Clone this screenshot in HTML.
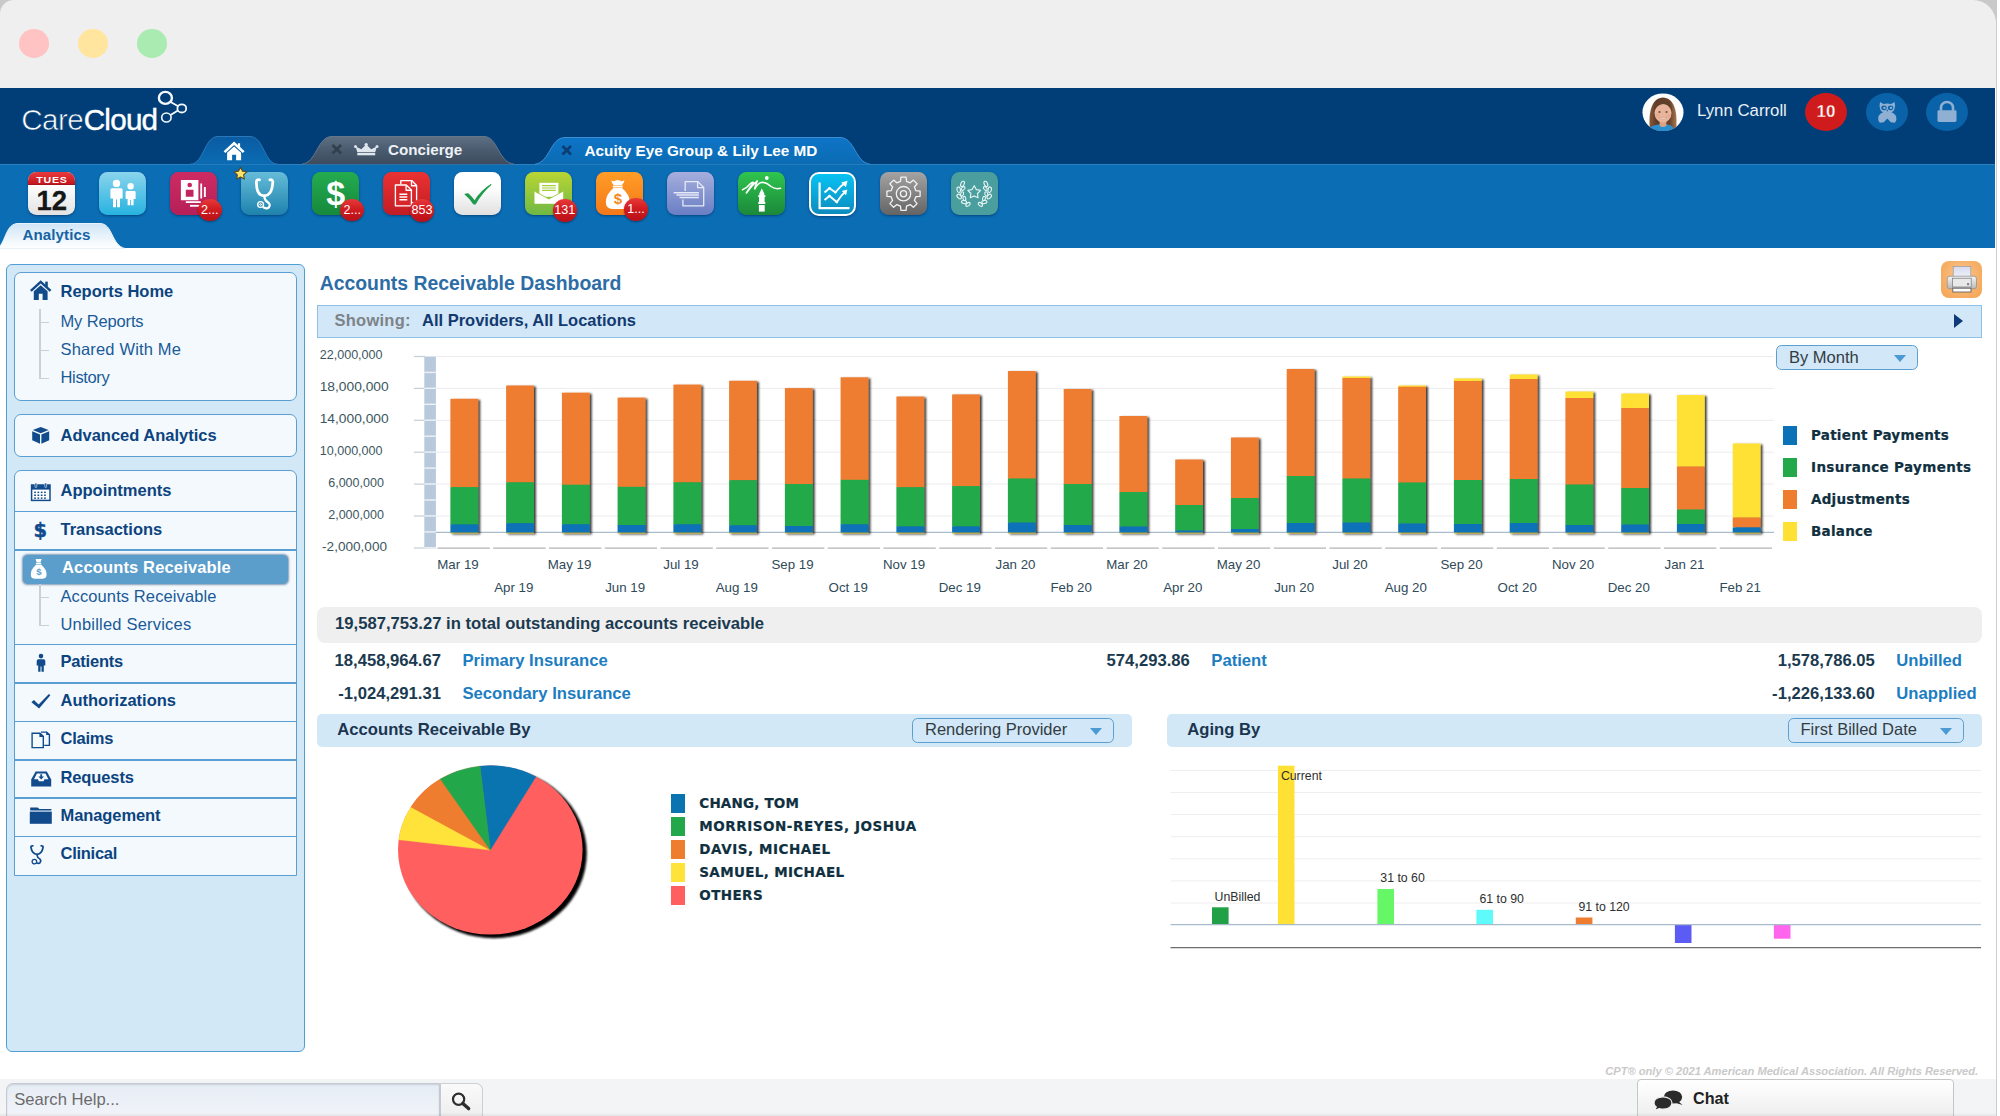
<!DOCTYPE html>
<html lang="en">
<head>
<meta charset="utf-8">
<title>CareCloud - Accounts Receivable Dashboard</title>
<style>
*{box-sizing:border-box;margin:0;padding:0}
html,body{width:2000px;height:1116px;overflow:hidden;background:#fff;font-family:"Liberation Sans",Arial,sans-serif;}
.abs{position:absolute}
#win{position:absolute;left:0;top:0;width:1997.5px;height:1116px;background:#fff;overflow:hidden}
#cornerbg{position:absolute;left:0;top:0;width:1997px;height:40px;background:#c9c9c9}
#redge{position:absolute;left:1996.1px;top:20px;width:1.4px;height:1100px;background:#cdcdcd}
#titlebar{position:absolute;left:0;top:0;width:1996.3px;height:88px;background:#efefef;border-radius:14px 23px 0 0}
.tl{position:absolute;top:28.6px;width:30.8px;height:29.2px;border-radius:50%}
#navy{position:absolute;left:0;top:87.5px;width:1995.2px;height:77.5px;background:#013e78}
#blue{position:absolute;left:0;top:164.4px;width:1995.2px;height:83.3px;background:#0b6db4;border-top:1px solid #2d7fbe}
#foot{position:absolute;left:0;top:1079.2px;width:1995.6px;height:37px;background:#f2f4f5}
/* sidebar */
#side{position:absolute;left:6px;top:264px;width:299px;height:788px;background:#d3e8f6;border:1.5px solid #4f9fd6;border-radius:6px}
.sbox{position:absolute;background:#f4f9fd;border:1.5px solid #5a9fd3;border-radius:7px}
.sh{position:absolute;font-weight:bold;font-size:16.5px;line-height:20px;color:#0c4480;white-space:nowrap;margin-left:.5px}
.ss{position:absolute;font-size:16.5px;line-height:20px;color:#1a5a98;white-space:nowrap;margin-left:.5px}
.sep{position:absolute;width:281px;height:1.5px;background:#5a9fd3}
.ico{position:absolute}
/* main */
#title{position:absolute;left:319.7px;top:272px;font-size:19.4px;line-height:22px;font-weight:bold;color:#2d6da6;white-space:nowrap}
.lbar{position:absolute;background:#d3e8f6;border-radius:5px}
.b16{font-weight:bold;font-size:16.65px;line-height:20px;color:#1b3a50;white-space:nowrap;position:absolute}
.lnk{font-weight:bold;font-size:16.65px;line-height:20px;color:#1c7dc1;white-space:nowrap;position:absolute}
.dd{position:absolute;background:#d2e7f7;border:1.3px solid #5b9fd0;border-radius:5.5px;font-size:16.5px;line-height:20px;color:#333c44;white-space:nowrap}
.dd span{position:absolute;left:12px;top:.6px}
.dd i{position:absolute;right:10.6px;top:9.2px;width:0;height:0;border-left:6.5px solid transparent;border-right:6.5px solid transparent;border-top:7.2px solid #4a9ad4}
.ti{position:absolute;top:172px;width:47.2px;height:43.2px;border-radius:8.5px;box-shadow:0 1px 2.5px rgba(0,20,60,.45)}
.bdg{position:absolute;width:24.4px;height:22.4px;margin-top:2.2px;border-radius:50%;background:linear-gradient(#e8393a 0%,#d11d22 45%,#b80f16 100%);color:#fff;font-size:12.6px;line-height:22.6px;text-align:center;box-shadow:0 1px 2px rgba(0,0,0,.4)}
.lg{position:absolute;font-family:"DejaVu Sans","Liberation Sans",sans-serif;font-weight:bold;font-size:13.5px;line-height:20px;color:#10303f;white-space:nowrap;letter-spacing:.25px;-webkit-text-stroke:.2px #10303f}
</style>
</head>
<body>
<div id="win">
<div id="cornerbg"></div><div id="redge"></div>
<div id="titlebar">
  <div class="tl" style="left:18.6px;background:#ffc3c4"></div>
  <div class="tl" style="left:77.6px;background:#ffe59d"></div>
  <div class="tl" style="left:136.6px;background:#a9ebb1"></div>
</div>
<div id="navy"></div>
<div id="blue"></div>
<!--HEADER-START-->
<!-- logo -->
<div class="abs" style="left:21.3px;top:102.5px;font-size:29.6px;line-height:34px;color:#fff;white-space:nowrap;letter-spacing:-.55px"><span style="-webkit-text-stroke:.65px #013e78">Care</span><span style="-webkit-text-stroke:.45px #fff;letter-spacing:-.75px;margin-left:.5px">Cloud</span></div>
<svg class="abs" style="left:155px;top:88px" width="36" height="40" viewBox="0 0 36 40"><g fill="none" stroke="#f4f9ff"><line x1="15.6" y1="14" x2="23.2" y2="18.3" stroke-width="1.8"/><line x1="22.9" y1="22.4" x2="15.6" y2="27" stroke-width="1.8"/><ellipse cx="10.4" cy="9.9" rx="6.5" ry="6" stroke-width="2.4"/><ellipse cx="26.8" cy="20.4" rx="4.4" ry="4.1" stroke-width="1.8"/><ellipse cx="11.4" cy="29.5" rx="4.7" ry="4.5" stroke-width="1.6"/></g></svg>
<!-- tabs -->
<svg class="abs" style="left:180px;top:130.4px" width="700" height="36" viewBox="0 0 700 36">
<defs>
<linearGradient id="gh" x1="0" y1="0" x2="0" y2="1"><stop offset="0" stop-color="#0a5ba3"/><stop offset="1" stop-color="#0b6cb3"/></linearGradient>
<linearGradient id="gc" x1="0" y1="0" x2="0" y2="1"><stop offset="0" stop-color="#5d6f83"/><stop offset=".5" stop-color="#4a5b6f"/><stop offset="1" stop-color="#3c4b5d"/></linearGradient>
<linearGradient id="ga" x1="0" y1="0" x2="0" y2="1"><stop offset="0" stop-color="#0e74c8"/><stop offset="1" stop-color="#0b6cb3"/></linearGradient>
</defs>
<path d="M10 34.2 C24 34.2 24 6.5 38 6.5 L70 6.5 C84 6.5 84 34.2 98 34.2 Z" fill="url(#gh)"/><path d="M10 34.2 C24 34.2 24 6.5 38 6.5 L70 6.5 C84 6.5 84 34.2 98 34.2" fill="none" stroke="#2a78b8" stroke-width="1"/>
<path d="M122 34.2 C137 32.5 137 6.5 152 6.5 L304 6.5 C318 6.5 318 32.5 334 34.2 Z" fill="url(#gc)"/><path d="M122 34.2 C137 32.5 137 6.5 152 6.5 L304 6.5 C318 6.5 318 32.5 334 34.2" fill="none" stroke="#66778a" stroke-width="1"/>
<path d="M355 34.2 C370 32.5 370 7.5 385 7.5 L660 7.5 C675 7.5 675 32.5 690 34.2 Z" fill="url(#ga)"/><path d="M355 34.2 C370 32.5 370 7.5 385 7.5 L660 7.5 C675 7.5 675 32.5 690 34.2" fill="none" stroke="#3a8ed2" stroke-width="1"/>
<!-- home icon -->
<g fill="#fff" transform="translate(0.6 2.2)"><path d="M53.5 9.2 L43 19 L44.8 20.8 L53.5 12.8 L62.2 20.8 L64 19 L59.5 14.8 L59.5 11 L57.3 11 L57.3 12.8 Z"/><path d="M46.5 20.5 L53.5 14.2 L60.5 20.5 L60.5 28 L55.5 28 L55.5 22.5 L51.5 22.5 L51.5 28 L46.5 28 Z"/></g>
<!-- crown -->
<g fill="#dfe5ec"><path d="M177.3 22.3 L175.6 16.6 L181.3 19.2 L186.2 14.6 L191.2 19.2 L196.9 16.6 L195.2 22.3 Z"/><rect x="177.3" y="23" width="17.9" height="2.3"/><circle cx="186.2" cy="14.6" r="1.7"/><circle cx="175.5" cy="16.6" r="1.5"/><circle cx="197" cy="16.6" r="1.5"/></g>
<g stroke="#333f4d" stroke-width="2.6" stroke-linecap="butt"><line x1="152.5" y1="15" x2="161" y2="23.5"/><line x1="161" y1="15" x2="152.5" y2="23.5"/></g>
<g stroke="#0d3d72" stroke-width="2.6"><line x1="382.5" y1="16" x2="391" y2="24.5"/><line x1="391" y1="16" x2="382.5" y2="24.5"/></g>
</svg>
<div class="abs" style="left:388px;top:139.6px;font-size:15.2px;line-height:20px;font-weight:bold;color:#eef2f6;white-space:nowrap">Concierge</div>
<div class="abs" style="left:584.5px;top:141px;font-size:15.3px;line-height:20px;font-weight:bold;color:#fff;white-space:nowrap">Acuity Eye Group &amp; Lily Lee MD</div>
<!-- user -->
<svg class="abs" style="left:1642.3px;top:92.6px" width="42" height="38.6" viewBox="0 0 44 44" preserveAspectRatio="none">
<defs><clipPath id="av"><circle cx="22" cy="22" r="21.5"/></clipPath><linearGradient id="hg" x1="0" y1="0" x2="1" y2="0"><stop offset="0" stop-color="#8a5a3c"/><stop offset=".25" stop-color="#5e3b28"/><stop offset=".75" stop-color="#6a432c"/><stop offset="1" stop-color="#a87650"/></linearGradient></defs>
<circle cx="22" cy="22" r="21.5" fill="#fdfdfd"/>
<g clip-path="url(#av)">
<path d="M8.5 44 C6.5 26 8.5 5.5 22 5 C35.5 5.5 37.5 26 35.5 44 Z" fill="url(#hg)"/>
<path d="M6 44 C8 37.5 14 36 19 36 L25 36 C30 36 33 38 34 44 Z" fill="#2a8fd0"/>
<path d="M18.5 30 H25.5 V37.5 Q22 40 18.5 37.5 Z" fill="#dba184"/>
<ellipse cx="22" cy="22.6" rx="8.9" ry="11.2" fill="#e8b59a"/>
<path d="M12.8 21 C12.6 11.5 18 8.6 22.6 8.6 C28 8.6 31.4 12.4 31.2 21 C29.6 15.6 26.4 12.8 22.2 12.4 C17.6 13 14.6 16 12.8 21 Z" fill="#61402b"/>
<path d="M17.6 27.6 Q22 31.8 26.4 27.6 Q22 29.4 17.6 27.6 Z" fill="#fff" stroke="#c98a78" stroke-width=".5"/>
<ellipse cx="18.3" cy="21.6" rx="1.3" ry=".9" fill="#4a3428"/><ellipse cx="25.7" cy="21.6" rx="1.3" ry=".9" fill="#4a3428"/>
<ellipse cx="16.3" cy="25.6" rx="2" ry="1.3" fill="#e39c8a" opacity=".55"/><ellipse cx="27.7" cy="25.6" rx="2" ry="1.3" fill="#e39c8a" opacity=".55"/>
</g>
</svg>
<div class="abs" style="left:1697px;top:101px;font-size:16.8px;line-height:20px;color:#eaf0f7;white-space:nowrap">Lynn Carroll</div>
<div class="abs" style="left:1805px;top:93px;width:42px;height:38px;border-radius:50%;background:#cf1b1b;color:#fff;font-weight:bold;font-size:17px;line-height:38.6px;text-align:center;-webkit-text-stroke:.35px #cf1b1b">10</div>
<div class="abs" style="left:1866px;top:93px;width:42px;height:38px;border-radius:50%;background:#0a62a8"></div>
<div class="abs" style="left:1926px;top:93px;width:42px;height:38px;border-radius:50%;background:#0a62a8"></div>
<svg class="abs" style="left:1866px;top:93px" width="42" height="38" viewBox="0 0 42 42" preserveAspectRatio="none"><path d="M14 9.9 L17.5 12.2 Q21.3 11 25.1 12.2 L28.6 9.9 Q29.7 15 28.3 18.6 Q27.4 20.6 25.5 21.4 Q30.8 23.5 30.4 29 Q30.2 31.6 28.8 32.8 L24.8 32.2 L21.3 28.2 L17.8 32.2 L13.8 32.8 Q12.4 31.6 12.2 29 Q11.8 23.5 17.1 21.4 Q15.2 20.6 14.3 18.6 Q12.9 15 14 9.9 Z" fill="#8fb0d2"/><circle cx="18" cy="16.4" r="2.7" fill="#0a62a8"/><circle cx="24.6" cy="16.4" r="2.7" fill="#0a62a8"/><circle cx="18.4" cy="16.4" r="1.3" fill="#8fb0d2"/><circle cx="25" cy="16.4" r="1.3" fill="#8fb0d2"/><path d="M20.3 18.6 L22.3 18.6 L21.3 20.6 Z" fill="#0a62a8"/></svg>
<svg class="abs" style="left:1926px;top:93px" width="42" height="38" viewBox="0 0 42 42" preserveAspectRatio="none"><rect x="11.5" y="19" width="19" height="13" rx="1.5" fill="#8fb0d2"/><path d="M15 19.5 V16 a6 6 0 0 1 12 0 V19.5" fill="none" stroke="#8fb0d2" stroke-width="2.6"/></svg>
<!-- analytics tab -->
<svg class="abs" style="left:0;top:219.8px" width="130" height="29" viewBox="0 0 130 29"><defs><linearGradient id="gan" x1="0" y1="0" x2="0" y2="1"><stop offset="0" stop-color="#cfe5f6"/><stop offset=".75" stop-color="#f4f9fd"/><stop offset="1" stop-color="#fff"/></linearGradient></defs><path d="M-2 28.5 C6 21 6 3.5 18 3.5 L100 3.5 C113 3.5 111 25 125 28.5 Z" fill="url(#gan)" stroke="#e8f2fa" stroke-width="1"/></svg>
<div class="abs" style="left:22.5px;top:224.5px;font-size:15.1px;line-height:20px;font-weight:bold;color:#1663a6;white-space:nowrap;letter-spacing:.1px">Analytics</div>
<!--HEADER-END-->
<!--TOOLBAR-START-->
<div class="ti" style="left:28.1px;background:linear-gradient(#fefefe 30%,#e2e2e2 100%);overflow:hidden"><div style="position:absolute;left:0;top:0;width:100%;height:13.2px;background:linear-gradient(#ea3a3e,#c4181f);color:#fff;font-weight:bold;font-size:10.6px;line-height:13.2px;text-align:center;letter-spacing:.75px;text-indent:.6px;border-bottom:1px solid #a8141b;overflow:hidden"><span style="display:block;transform:translateY(2px) scaleY(.8)">TUES</span></div><div style="position:absolute;left:0;top:13.8px;width:100%;text-align:center;font-weight:bold;font-size:27.5px;line-height:30px;color:#161616;letter-spacing:-.2px;-webkit-text-stroke:.3px #161616">12</div></div>
<div class="ti" style="left:99.1px;background:linear-gradient(#8ad4ec,#27b3e0);"><svg width="47" height="43" viewBox="0 0 47 43" style="position:absolute;left:0;top:0;overflow:visible"><g fill="#fff"><circle cx="17.5" cy="11.4" r="3.7"/><path d="M11.4 17.8 Q11.4 16.2 13 16.2 L22 16.2 Q23.6 16.2 23.6 17.8 L23.6 26.5 L21 26.5 L21 35.3 L18 35.3 L18 27.5 L17 27.5 L17 35.3 L14 35.3 L14 26.5 L11.4 26.5 Z"/><circle cx="31.6" cy="14.3" r="3.2"/><path d="M26.6 20.2 Q26.6 19 27.9 19 L35.3 19 Q36.6 19 36.6 20.2 L36.6 27 L34.6 27 L34.6 33.3 L32 33.3 L32 28 L31.2 28 L31.2 33.3 L28.6 33.3 L28.6 27 L26.6 27 Z"/></g></svg></div>
<div class="ti" style="left:170.1px;background:linear-gradient(#cd2b62,#b61f58);"><svg width="47" height="43" viewBox="0 0 47 43" style="position:absolute;left:0;top:0;overflow:visible"><g fill="#fff"><path d="M10.9 8 H28.4 V28.3 H10.9 Z M15.8 17.8 V24.8 H23.5 V17.8 Z" fill-rule="evenodd"/><rect x="30.3" y="11.5" width="1.8" height="15"/><rect x="33.9" y="15" width="1.9" height="10"/><rect x="15.8" y="29.2" width="15" height="1.8"/><rect x="20" y="32.9" width="10.8" height="1.8"/></g><circle cx="19.7" cy="13" r="2.3" fill="#c5265c"/></svg></div>
<div class="ti" style="left:241.1px;background:linear-gradient(#66bcd9,#1e82ac);"><svg width="47" height="43" viewBox="0 0 47 43" style="position:absolute;left:0;top:0;overflow:visible"><g fill="none" stroke="#fff" stroke-linecap="round"><path d="M18.5 7.8 Q15.2 7.2 15.4 10.5 Q15.6 21 20 23 Q23.2 24.3 26.5 23 Q31 21 31.8 10.5 Q32 7.2 28.8 7.8" stroke-width="2.8"/><path d="M23.3 24 Q23.3 28 26.5 30 Q30 32.5 28 35.2 Q26 37.5 22.8 35.5" stroke-width="2.2"/><circle cx="19.6" cy="32.5" r="2.9" stroke-width="1.4"/><circle cx="19.6" cy="32.5" r="0.9" stroke-width="1"/></g></svg></div>
<div class="ti" style="left:312.1px;background:linear-gradient(#24ab50,#17893b)"><div style="position:absolute;left:0;top:1.8px;width:100%;text-align:center;font-weight:bold;font-size:34px;line-height:38px;color:#fff">$</div></div>
<div class="ti" style="left:383.1px;background:linear-gradient(#ea3232,#c31c24);"><svg width="47" height="43" viewBox="0 0 47 43" style="position:absolute;left:0;top:0;overflow:visible"><g fill="none" stroke="#fff" stroke-width="1.35" stroke-linejoin="round"><path d="M17.8 12.3 V8.6 H28.7 L33.6 13.5 V30.6 H29"/><path d="M28.5 8.8 V13.7 H33.4"/><path d="M12.4 13 H23.3 L28.4 18 V33.8 H12.4 Z" fill="#d8262b"/><path d="M23.1 13.2 V18.2 H28.2"/><path d="M16.4 22.2 H24.3 M16.4 25 H24.3 M16.4 27.8 H24.3" stroke-width="1.5"/></g></svg></div>
<div class="ti" style="left:454.1px;background:linear-gradient(#ffffff 35%,#e0e0e0);"><svg width="47" height="43" viewBox="0 0 47 43" style="position:absolute;left:0;top:0;overflow:visible"><path d="M10.3 22.3 Q12.5 20.8 14.6 21.4 Q18 24.5 20.6 28.3 Q26.5 18.5 36.8 12 L37.6 12.8 Q28.5 20.5 21.8 32.2 Q20.5 32.8 19.2 32.2 Q15.5 26.5 10.3 22.3 Z" fill="#1f9a4f"/></svg></div>
<div class="ti" style="left:525.1px;background:linear-gradient(#b9d534,#70b845);"><svg width="47" height="43" viewBox="0 0 47 43" style="position:absolute;left:0;top:0;overflow:visible"><rect x="14.4" y="10.8" width="19" height="14" fill="#fff"/><g stroke="#a5cf3a" stroke-width="1.2"><path d="M17 13.6 H30.8 M17 16 H30.8 M17 18.4 H30.8"/></g><path d="M9.5 19.2 L23.9 27 L38.2 19.2 V31.8 H9.5 Z" fill="#fff"/><path d="M9.5 19.2 L23.9 27 L38.2 19.2" fill="none" stroke="#9ccb3c" stroke-width=".9"/></svg></div>
<div class="ti" style="left:596.1px;background:linear-gradient(#ff9d26,#f47819)"><svg width="47" height="43" viewBox="0 0 47 43" style="position:absolute;left:0;top:0"><g fill="#fff"><path d="M15.3 8.3 Q17.5 10 19.5 8.6 Q21.7 7.2 23.8 8.6 Q26 10 28.5 8 Q28 11 25.9 13.1 L17.6 13.1 Q15.6 11 15.3 8.3 Z"/><rect x="16.7" y="13.6" width="10.2" height="1.8" rx=".9"/><path d="M17.5 16 L26 16 Q33.8 22.5 33.8 30 Q33.8 37 27 37 L16.5 37 Q9.8 37 9.8 30 Q9.8 22.5 17.5 16 Z"/></g></svg><div style="position:absolute;left:15.6px;top:17.5px;width:12.5px;text-align:center;font-weight:bold;font-size:15px;line-height:18px;color:#f58a1f">$</div></div>
<div class="ti" style="left:667.1px;background:linear-gradient(#a5aedd,#6a7ec4);"><svg width="47" height="43" viewBox="0 0 47 43" style="position:absolute;left:0;top:0;overflow:visible"><g fill="none" stroke="#e6e9f7" stroke-width="1.3" stroke-linejoin="round"><path d="M18.2 19 V9.6 H30.8 L36.7 15.5 V33.8 H15.9 V27.5"/><path d="M30.6 9.8 V15.7 H36.5"/><path d="M6.7 20.7 H31.9 M9.5 23.1 H31.9 M12.5 25.5 H31.9" stroke-width="1.5"/></g></svg></div>
<div class="ti" style="left:738.1px;background:linear-gradient(#2fc54f,#1b8839);"><svg width="47" height="43" viewBox="0 0 47 43" style="position:absolute;left:0;top:0;overflow:visible"><g fill="none" stroke="#fff" stroke-linecap="round"><path d="M4.5 17.8 Q8.5 16.5 12 12 Q14.5 9.5 15.5 10.5 Q12 15 8 21.5 Q14 13.5 19.5 8.5 Q17.5 13 16.5 17.5 Q20 10.5 24.5 10.2 Q29 10.5 33 14.5 Q37.5 17.5 42.5 16.3" stroke-width="1.5"/></g><circle cx="28.8" cy="6" r="1.9" fill="#fff"/><path d="M23.8 16.5 L26.3 21.5 V23.2 H27.4 V25 H26.6 V30 H27.3 V32 H20.3 V30 H21 V25 H20.2 V23.2 H21.3 V21.5 Z" fill="#fff"/><rect x="20.9" y="33" width="5.8" height="6.6" fill="#fff"/></svg></div>
<div class="ti" style="left:809.1px;background:linear-gradient(#07c3f3,#0d8bbd);border:2.6px solid #fff;border-radius:10px;height:44px;"><svg width="47" height="43" viewBox="0 0 47 43" style="position:absolute;left:0;top:0;overflow:visible"><g fill="none" stroke="#fff"><path d="M8.6 8.6 V34.2 H38.5" stroke-width="2.2"/><path d="M13.5 18.5 L18.5 14.3 L24.3 18.3 L30 12.2 L33.5 9.5" stroke-width="1.9"/><path d="M13.5 26 L18.5 22 L25.8 28 L30.5 21.5 L33.8 18.2" stroke-width="1.9"/></g><g fill="#fff"><path d="M30.2 8.6 L36.6 6.8 L34.9 13.2 Z"/><path d="M30.8 17 L36.4 15.6 L35 21.2 Z"/><circle cx="18.5" cy="14.3" r="1.3"/><circle cx="24.3" cy="18.3" r="1.3"/><circle cx="18.5" cy="22" r="1.3"/><circle cx="25.8" cy="28" r="1.3"/></g></svg></div>
<div class="ti" style="left:880.1px;background:linear-gradient(#a3a3a3,#646464);"><svg width="47" height="43" viewBox="0 0 47 43" style="position:absolute;left:0;top:0;overflow:visible"><g fill="none" stroke="#f2f2f2" stroke-width="1.3" stroke-linejoin="round"><path d="M20.9 5.1 L26.1 5.1 L26.5 9.3 L30.2 10.8 L33.4 8.1 L37.1 11.8 L34.4 15.0 L35.9 18.7 L40.1 19.1 L40.1 24.3 L35.9 24.7 L34.4 28.4 L37.1 31.6 L33.4 35.3 L30.2 32.6 L26.5 34.1 L26.1 38.3 L20.9 38.3 L20.5 34.1 L16.8 32.6 L13.6 35.3 L9.9 31.6 L12.6 28.4 L11.1 24.7 L6.9 24.3 L6.9 19.1 L11.1 18.7 L12.6 15.0 L9.9 11.8 L13.6 8.1 L16.8 10.8 L20.5 9.3 Z"/><circle cx="23.5" cy="21.7" r="7.2"/><circle cx="23.5" cy="21.7" r="3.1"/></g></svg></div>
<div class="ti" style="left:951.1px;background:#4a9e9e;"><svg width="47" height="43" viewBox="0 0 47 43" style="position:absolute;left:0;top:0;overflow:visible"><g fill="none" stroke="#e9f5f5" stroke-width="1.1"><path d="M23.2 13.7 L25.3 17.6 L29.6 18.3 L26.5 21.5 L27.1 25.8 L23.2 23.9 L19.3 25.8 L19.9 21.5 L16.8 18.3 L21.1 17.6 Z" stroke-linejoin="round"/><ellipse cx="11.5" cy="11.9" rx="1.7" ry="2.8" transform="rotate(24 11.5 11.9)"/><ellipse cx="7.7" cy="17.7" rx="1.7" ry="2.8" transform="rotate(-10 7.7 17.7)"/><ellipse cx="8.2" cy="24.6" rx="1.7" ry="2.7" transform="rotate(-42 8.2 24.6)"/><ellipse cx="13.1" cy="30.0" rx="1.6" ry="2.6" transform="rotate(-80 13.1 30.0)"/><ellipse cx="17.0" cy="32.4" rx="1.5" ry="2.5" transform="rotate(-126 17.0 32.4)"/><ellipse cx="12.1" cy="16.5" rx="1.4" ry="2.2" transform="rotate(52 12.1 16.5)"/><ellipse cx="11.1" cy="21.9" rx="1.4" ry="2.2" transform="rotate(18 11.1 21.9)"/><ellipse cx="13.4" cy="26.5" rx="1.4" ry="2.1" transform="rotate(-16 13.4 26.5)"/><ellipse cx="34.9" cy="11.9" rx="1.7" ry="2.8" transform="rotate(-24 34.9 11.9)"/><ellipse cx="38.7" cy="17.7" rx="1.7" ry="2.8" transform="rotate(10 38.7 17.7)"/><ellipse cx="38.2" cy="24.6" rx="1.7" ry="2.7" transform="rotate(42 38.2 24.6)"/><ellipse cx="33.3" cy="30.0" rx="1.6" ry="2.6" transform="rotate(80 33.3 30.0)"/><ellipse cx="29.4" cy="32.4" rx="1.5" ry="2.5" transform="rotate(126 29.4 32.4)"/><ellipse cx="34.3" cy="16.5" rx="1.4" ry="2.2" transform="rotate(-52 34.3 16.5)"/><ellipse cx="35.3" cy="21.9" rx="1.4" ry="2.2" transform="rotate(-18 35.3 21.9)"/><ellipse cx="33.0" cy="26.5" rx="1.4" ry="2.1" transform="rotate(16 33.0 26.5)"/></g></svg></div>
<div class="bdg" style="left:197.5px;top:196.6px">2...</div>
<div class="bdg" style="left:340.1px;top:196.8px">2...</div>
<div class="bdg" style="left:409.8px;top:197.2px">853</div>
<div class="bdg" style="left:552.5px;top:197.2px">131</div>
<div class="bdg" style="left:623.8px;top:196.2px">1...</div>
<svg class="abs" style="left:232.4px;top:165.2px" width="17" height="17" viewBox="0 0 17 17"><path d="M8.5 2.2 L10.4 6.1 L14.8 6.8 L11.6 9.8 L12.4 14.1 L8.5 12.1 L4.6 14.1 L5.4 9.8 L2.2 6.8 L6.6 6.1 Z" fill="#ffe36a" stroke="#5a4a20" stroke-width="1.1" stroke-linejoin="round"/></svg>
<!--TOOLBAR-END-->
<div id="side"></div>
<!--SIDEBAR-START-->
<div class="sbox" style="left:14px;top:272px;width:283px;height:129px"></div>
<div class="sbox" style="left:14px;top:414px;width:283px;height:43px"></div>
<div class="sbox" style="left:14px;top:470px;width:283px;height:406px;border-radius:7px 7px 0 0"></div>
<div class="sep" style="left:15px;top:510.5px"></div>
<div class="sep" style="left:15px;top:549px"></div>
<div class="sep" style="left:15px;top:643.5px"></div>
<div class="sep" style="left:15px;top:682px"></div>
<div class="sep" style="left:15px;top:720.5px"></div>
<div class="sep" style="left:15px;top:759px"></div>
<div class="sep" style="left:15px;top:797px"></div>
<div class="sep" style="left:15px;top:835.5px"></div>
<div class="abs" style="left:23px;top:555px;width:265px;height:28.5px;background:#5b9dcb;border-radius:5px;box-shadow:0 0 2px 0.5px rgba(40,80,120,.55)"></div>
<!-- tree lines -->
<div class="abs" style="left:39px;top:309px;width:1.5px;height:70px;background:#cdd0d3"></div>
<div class="abs" style="left:41px;top:321.5px;width:8px;height:1.5px;background:#cdd0d3"></div>
<div class="abs" style="left:41px;top:349.5px;width:8px;height:1.5px;background:#cdd0d3"></div>
<div class="abs" style="left:39px;top:377.5px;width:10px;height:1.5px;background:#cdd0d3"></div>
<div class="abs" style="left:39px;top:584px;width:1.5px;height:42px;background:#cdd0d3"></div>
<div class="abs" style="left:41px;top:596.5px;width:8px;height:1.5px;background:#cdd0d3"></div>
<div class="abs" style="left:39px;top:624.5px;width:10px;height:1.5px;background:#cdd0d3"></div>
<!-- labels -->
<div class="sh" style="left:60px;top:280.5px">Reports Home</div>
<div class="ss" style="left:60px;top:310.5px;letter-spacing:-0.14px">My Reports</div>
<div class="ss" style="left:60px;top:338.7px;letter-spacing:0.16px">Shared With Me</div>
<div class="ss" style="left:60px;top:366.8px;letter-spacing:-0.35px">History</div>
<div class="sh" style="left:60px;top:425px">Advanced Analytics</div>
<div class="sh" style="left:60px;top:480px">Appointments</div>
<div class="sh" style="left:60px;top:518.5px">Transactions</div>
<div class="sh" style="left:61.5px;top:556.7px;color:#fff;letter-spacing:.15px">Accounts Receivable</div>
<div class="ss" style="left:60px;top:586px;letter-spacing:.1px">Accounts Receivable</div>
<div class="ss" style="left:60px;top:614px;letter-spacing:0.2px">Unbilled Services</div>
<div class="sh" style="left:60px;top:651.3px;letter-spacing:-0.2px">Patients</div>
<div class="sh" style="left:60px;top:690px">Authorizations</div>
<div class="sh" style="left:60px;top:728.2px;letter-spacing:-0.23px">Claims</div>
<div class="sh" style="left:60px;top:766.9px;letter-spacing:-0.12px">Requests</div>
<div class="sh" style="left:60px;top:805.1px;letter-spacing:-0.09px">Management</div>
<div class="sh" style="left:60px;top:843.3px;letter-spacing:-0.26px">Clinical</div>
<!--SIDEICONS-->
<svg class="abs" style="left:29px;top:279px" width="24" height="22" viewBox="0 0 24 22"><g fill="#124b8c"><path d="M11.7 1.2 L1 11 L2.7 12.7 L11.7 4.6 L20.7 12.7 L22.4 11 Z"/><path d="M4.8 12.3 L11.7 6.2 L18.6 12.3 V21 H13.6 V14.8 H9.8 V21 H4.8 Z"/><rect x="16.2" y="2.6" width="2.6" height="5.2"/></g></svg>
<svg class="abs" style="left:31px;top:426px" width="20" height="19" viewBox="0 0 20 19"><g fill="#124b8c"><path d="M9.7 0.9 L17.6 4 L9.7 7.2 L1.8 4 Z"/><path d="M1.2 5.2 L9 8.4 V17.8 L1.2 14.3 Z"/><path d="M18.2 5.2 L10.4 8.4 V17.8 L18.2 14.3 Z"/></g></svg>
<svg class="abs" style="left:30px;top:482px" width="22" height="20" viewBox="0 0 22 20"><rect x="1.6" y="3" width="18.4" height="15.4" fill="#fff" stroke="#124b8c" stroke-width="1.5"/><rect x="1.6" y="3" width="18.4" height="4.6" fill="#124b8c"/><g fill="#124b8c"><rect x="5" y="1" width="1.8" height="4.4" rx=".6" stroke="#f5fafd" stroke-width=".6"/><rect x="14.8" y="1" width="1.8" height="4.4" rx=".6" stroke="#f5fafd" stroke-width=".6"/></g><g fill="#124b8c"><rect x="4.2" y="9.6" width="1.7" height="1.5"/><rect x="7.5" y="9.6" width="1.7" height="1.5"/><rect x="10.8" y="9.6" width="1.7" height="1.5"/><rect x="14.1" y="9.6" width="1.7" height="1.5"/><rect x="4.2" y="12.5" width="1.7" height="1.5"/><rect x="7.5" y="12.5" width="1.7" height="1.5"/><rect x="10.8" y="12.5" width="1.7" height="1.5"/><rect x="14.1" y="12.5" width="1.7" height="1.5"/><rect x="4.2" y="15.4" width="1.7" height="1.5"/><rect x="7.5" y="15.4" width="1.7" height="1.5"/><rect x="10.8" y="15.4" width="1.7" height="1.5"/><rect x="14.1" y="15.4" width="1.7" height="1.5"/></g></svg>
<div class="abs" style="left:33.5px;top:519.8px;font-family:'DejaVu Sans','Liberation Sans',sans-serif;font-weight:bold;font-size:19.5px;line-height:22px;color:#124b8c;-webkit-text-stroke:.4px #124b8c">$</div>
<svg class="abs" style="left:30px;top:558px" width="18" height="22" viewBox="0 0 18 22"><g fill="#fff"><path d="M5.6 1 H11.6 L10.6 4.4 H6.6 Z"/><rect x="5.8" y="4.9" width="5.6" height="1.4" rx=".5"/><path d="M6 6.8 H11.2 Q16.6 11.5 16.6 16.4 Q16.6 20.8 12 20.8 H5.2 Q0.8 20.8 0.8 16.4 Q0.8 11.5 6 6.8 Z"/></g></svg>
<div class="abs" style="left:34.3px;top:566px;width:9px;text-align:center;font-weight:bold;font-size:9.5px;line-height:12px;color:#5b9dcb">$</div>
<svg class="abs" style="left:35px;top:653px" width="12" height="20" viewBox="0 0 12 20"><g fill="#124b8c"><circle cx="6" cy="3.1" r="2.3"/><path d="M3.4 6.2 H8.6 Q10.3 6.2 10.3 8 V12.6 H8.8 V18.8 H6.5 V13.6 H5.5 V18.8 H3.2 V12.6 H1.7 V8 Q1.7 6.2 3.4 6.2 Z"/></g></svg>
<svg class="abs" style="left:30px;top:692px" width="22" height="18" viewBox="0 0 22 18"><path d="M1.4 10.2 L3.9 7.9 L8.6 12.4 L18.9 2 L20.4 3.2 L9.1 16.6 Z" fill="#124b8c"/></svg>
<svg class="abs" style="left:30px;top:730px" width="22" height="20" viewBox="0 0 22 20"><g fill="none" stroke="#124b8c" stroke-width="1.4"><path d="M11 2.1 H16.6 L19.4 4.6 V15.4 H14.2"/><path d="M2.1 3.2 H10 L13.3 6.4 V17.6 H2.1 Z" fill="#f5fafd"/></g><path d="M9.4 2.6 L13.8 6.9 H9.4 Z" fill="#124b8c"/><path d="M16.2 1.6 L20 5 H16.2 Z" fill="#124b8c"/></svg>
<svg class="abs" style="left:29.5px;top:769.5px" width="23" height="18" viewBox="0 0 23 18"><path d="M5.6 1.6 H16.8 L21.2 9.6 V16.4 H1.2 V9.6 Z" fill="#124b8c"/><path d="M6.9 3.6 H15.5 L18.4 9.2 H14.4 L13.6 11.2 H8.8 L8 9.2 H4 Z" fill="#f5fafd"/><path d="M10.3 4.2 H12.1 V6.6 H14 L11.2 9.4 L8.4 6.6 H10.3 Z" fill="#124b8c"/></svg>
<svg class="abs" style="left:29px;top:805.5px" width="24" height="19" viewBox="0 0 24 19"><g fill="#124b8c"><path d="M1.2 1.4 H8.6 L10.4 3 H22.4 V4.6 H1.2 Z"/><path d="M0.8 5.6 H22.8 V17.8 H0.8 Z"/></g></svg>
<svg class="abs" style="left:28.5px;top:844px" width="17" height="22" viewBox="0 0 17 22"><g fill="none" stroke="#124b8c" stroke-linecap="round"><path d="M3.8 1.8 Q1.6 1.6 2 3.6 Q3 9.6 8 10.4 Q13 9.6 14 3.6 Q14.4 1.6 12.2 1.8" stroke-width="1.8"/><path d="M8 10.6 Q8.2 13.4 10.4 14.6 Q12.6 16 11.2 18.4 Q10 20 8 19" stroke-width="1.6"/><circle cx="5.4" cy="17.6" r="2.3" stroke-width="1.3"/></g></svg>
<!--SIDEBAR-END-->
<div id="title">Accounts Receivable Dashboard</div>
<!--MAIN-START-->
<svg class="abs" style="left:310px;top:340px" width="1470" height="270" viewBox="310 340 1470 270" font-family="Liberation Sans, Arial, sans-serif">
<defs><filter id="bsh" x="-20%" y="-5%" width="150%" height="112%"><feGaussianBlur in="SourceAlpha" stdDeviation="0.8"/><feOffset dx="2.1" dy="1.4"/><feComponentTransfer><feFuncA type="linear" slope="0.78"/></feComponentTransfer><feMerge><feMergeNode/><feMergeNode in="SourceGraphic"/></feMerge></filter></defs>
<line x1="436" y1="356.5" x2="1774" y2="356.5" stroke="#ececec" stroke-width="1"/>
<line x1="436" y1="388.4" x2="1774" y2="388.4" stroke="#ececec" stroke-width="1"/>
<line x1="436" y1="420.3" x2="1774" y2="420.3" stroke="#ececec" stroke-width="1"/>
<line x1="436" y1="452.2" x2="1774" y2="452.2" stroke="#ececec" stroke-width="1"/>
<line x1="436" y1="484.1" x2="1774" y2="484.1" stroke="#ececec" stroke-width="1"/>
<line x1="436" y1="516" x2="1774" y2="516" stroke="#ececec" stroke-width="1"/>
<line x1="414" y1="356.5" x2="425" y2="356.5" stroke="#c3ced6" stroke-width="1.2"/>
<line x1="414" y1="388.4" x2="425" y2="388.4" stroke="#c3ced6" stroke-width="1.2"/>
<line x1="414" y1="420.3" x2="425" y2="420.3" stroke="#c3ced6" stroke-width="1.2"/>
<line x1="414" y1="452.2" x2="425" y2="452.2" stroke="#c3ced6" stroke-width="1.2"/>
<line x1="414" y1="484.1" x2="425" y2="484.1" stroke="#c3ced6" stroke-width="1.2"/>
<line x1="414" y1="516" x2="425" y2="516" stroke="#c3ced6" stroke-width="1.2"/>
<line x1="414" y1="548" x2="425" y2="548" stroke="#c3ced6" stroke-width="1.2"/>
<rect x="424.3" y="356.5" width="11.6" height="192" fill="#b9c9dc"/>
<rect x="424.3" y="371.7" width="11.6" height="1.4" fill="#eef2f7"/>
<rect x="424.3" y="387.6" width="11.6" height="1.4" fill="#eef2f7"/>
<rect x="424.3" y="403.6" width="11.6" height="1.4" fill="#eef2f7"/>
<rect x="424.3" y="419.5" width="11.6" height="1.4" fill="#eef2f7"/>
<rect x="424.3" y="435.5" width="11.6" height="1.4" fill="#eef2f7"/>
<rect x="424.3" y="451.4" width="11.6" height="1.4" fill="#eef2f7"/>
<rect x="424.3" y="467.4" width="11.6" height="1.4" fill="#eef2f7"/>
<rect x="424.3" y="483.3" width="11.6" height="1.4" fill="#eef2f7"/>
<rect x="424.3" y="499.3" width="11.6" height="1.4" fill="#eef2f7"/>
<rect x="424.3" y="515.2" width="11.6" height="1.4" fill="#eef2f7"/>
<rect x="424.3" y="531.2" width="11.6" height="1.4" fill="#eef2f7"/>
<rect x="424.3" y="547.1" width="11.6" height="1.4" fill="#eef2f7"/>
<line x1="436" y1="532.4" x2="1774" y2="532.4" stroke="#a9bccd" stroke-width="1.1"/>
<text x="319.7" y="359.4" font-size="13" fill="#3c5660" textLength="62.9" lengthAdjust="spacingAndGlyphs">22,000,000</text>
<text x="319.7" y="390.6" font-size="13" fill="#3c5660" textLength="69" lengthAdjust="spacingAndGlyphs">18,000,000</text>
<text x="319.7" y="422.5" font-size="13" fill="#3c5660" textLength="69" lengthAdjust="spacingAndGlyphs">14,000,000</text>
<text x="319.7" y="454.7" font-size="13" fill="#3c5660" textLength="62.9" lengthAdjust="spacingAndGlyphs">10,000,000</text>
<text x="328.2" y="486.7" font-size="13" fill="#3c5660" textLength="55.7" lengthAdjust="spacingAndGlyphs">6,000,000</text>
<text x="328.2" y="518.8" font-size="13" fill="#3c5660" textLength="55.7" lengthAdjust="spacingAndGlyphs">2,000,000</text>
<text x="322.1" y="550.8" font-size="13" fill="#3c5660" textLength="64.9" lengthAdjust="spacingAndGlyphs">-2,000,000</text>
<g filter="url(#bsh)">
<rect x="450.4" y="532.4" width="27.8" height="1.1" fill="#c9b63a"/>
<rect x="450.4" y="398.8" width="27.8" height="88.6" fill="#ee7d30"/>
<rect x="450.4" y="487.1" width="27.8" height="37.6" fill="#23a94a"/>
<rect x="450.4" y="524.4" width="27.8" height="8.0" fill="#0c72b7"/>
<rect x="506.1" y="532.4" width="27.8" height="1.1" fill="#c9b63a"/>
<rect x="506.1" y="385.5" width="27.8" height="97.1" fill="#ee7d30"/>
<rect x="506.1" y="482.3" width="27.8" height="41.2" fill="#23a94a"/>
<rect x="506.1" y="523.2" width="27.8" height="9.2" fill="#0c72b7"/>
<rect x="561.9" y="532.4" width="27.8" height="1.1" fill="#c9b63a"/>
<rect x="561.9" y="392.7" width="27.8" height="92.3" fill="#ee7d30"/>
<rect x="561.9" y="484.7" width="27.8" height="39.9" fill="#23a94a"/>
<rect x="561.9" y="524.3" width="27.8" height="8.1" fill="#0c72b7"/>
<rect x="617.6" y="532.4" width="27.8" height="1.1" fill="#c9b63a"/>
<rect x="617.6" y="397.6" width="27.8" height="89.5" fill="#ee7d30"/>
<rect x="617.6" y="486.8" width="27.8" height="38.5" fill="#23a94a"/>
<rect x="617.6" y="525" width="27.8" height="7.4" fill="#0c72b7"/>
<rect x="673.4" y="532.4" width="27.8" height="1.1" fill="#c9b63a"/>
<rect x="673.4" y="384.6" width="27.8" height="98.0" fill="#ee7d30"/>
<rect x="673.4" y="482.3" width="27.8" height="42.3" fill="#23a94a"/>
<rect x="673.4" y="524.3" width="27.8" height="8.1" fill="#0c72b7"/>
<rect x="729.1" y="532.4" width="27.8" height="1.1" fill="#c9b63a"/>
<rect x="729.1" y="380.8" width="27.8" height="99.7" fill="#ee7d30"/>
<rect x="729.1" y="480.2" width="27.8" height="45.4" fill="#23a94a"/>
<rect x="729.1" y="525.3" width="27.8" height="7.1" fill="#0c72b7"/>
<rect x="784.9" y="532.4" width="27.8" height="1.1" fill="#c9b63a"/>
<rect x="784.9" y="388.1" width="27.8" height="96.2" fill="#ee7d30"/>
<rect x="784.9" y="484" width="27.8" height="42.3" fill="#23a94a"/>
<rect x="784.9" y="526" width="27.8" height="6.4" fill="#0c72b7"/>
<rect x="840.6" y="532.4" width="27.8" height="1.1" fill="#c9b63a"/>
<rect x="840.6" y="377.3" width="27.8" height="102.8" fill="#ee7d30"/>
<rect x="840.6" y="479.8" width="27.8" height="44.8" fill="#23a94a"/>
<rect x="840.6" y="524.3" width="27.8" height="8.1" fill="#0c72b7"/>
<rect x="896.4" y="532.4" width="27.8" height="1.1" fill="#c9b63a"/>
<rect x="896.4" y="396.5" width="27.8" height="91.0" fill="#ee7d30"/>
<rect x="896.4" y="487.2" width="27.8" height="39.5" fill="#23a94a"/>
<rect x="896.4" y="526.4" width="27.8" height="6.0" fill="#0c72b7"/>
<rect x="952.1" y="532.4" width="27.8" height="1.1" fill="#c9b63a"/>
<rect x="952.1" y="394.4" width="27.8" height="92.0" fill="#ee7d30"/>
<rect x="952.1" y="486.1" width="27.8" height="40.6" fill="#23a94a"/>
<rect x="952.1" y="526.4" width="27.8" height="6.0" fill="#0c72b7"/>
<rect x="1007.9" y="532.4" width="27.8" height="1.1" fill="#c9b63a"/>
<rect x="1007.9" y="371" width="27.8" height="107.8" fill="#ee7d30"/>
<rect x="1007.9" y="478.5" width="27.8" height="44.3" fill="#23a94a"/>
<rect x="1007.9" y="522.5" width="27.8" height="9.9" fill="#0c72b7"/>
<rect x="1063.7" y="532.4" width="27.8" height="1.1" fill="#c9b63a"/>
<rect x="1063.7" y="389" width="27.8" height="95.3" fill="#ee7d30"/>
<rect x="1063.7" y="484" width="27.8" height="41.3" fill="#23a94a"/>
<rect x="1063.7" y="525" width="27.8" height="7.4" fill="#0c72b7"/>
<rect x="1119.4" y="532.4" width="27.8" height="1.1" fill="#c9b63a"/>
<rect x="1119.4" y="416" width="27.8" height="76.3" fill="#ee7d30"/>
<rect x="1119.4" y="492" width="27.8" height="34.8" fill="#23a94a"/>
<rect x="1119.4" y="526.5" width="27.8" height="5.9" fill="#0c72b7"/>
<rect x="1175.2" y="532.4" width="27.8" height="1.1" fill="#c9b63a"/>
<rect x="1175.2" y="459.5" width="27.8" height="45.8" fill="#ee7d30"/>
<rect x="1175.2" y="505" width="27.8" height="25.8" fill="#23a94a"/>
<rect x="1175.2" y="530.5" width="27.8" height="1.9" fill="#0c72b7"/>
<rect x="1230.9" y="532.4" width="27.8" height="1.1" fill="#c9b63a"/>
<rect x="1230.9" y="437.5" width="27.8" height="60.8" fill="#ee7d30"/>
<rect x="1230.9" y="498" width="27.8" height="31.3" fill="#23a94a"/>
<rect x="1230.9" y="529" width="27.8" height="3.4" fill="#0c72b7"/>
<rect x="1286.7" y="532.4" width="27.8" height="1.1" fill="#c9b63a"/>
<rect x="1286.7" y="369" width="27.8" height="107.3" fill="#ee7d30"/>
<rect x="1286.7" y="476" width="27.8" height="47.3" fill="#23a94a"/>
<rect x="1286.7" y="523" width="27.8" height="9.4" fill="#0c72b7"/>
<rect x="1342.4" y="532.4" width="27.8" height="1.1" fill="#c9b63a"/>
<rect x="1342.4" y="376.5" width="27.8" height="1.8" fill="#ffe135"/>
<rect x="1342.4" y="378" width="27.8" height="100.8" fill="#ee7d30"/>
<rect x="1342.4" y="478.5" width="27.8" height="44.3" fill="#23a94a"/>
<rect x="1342.4" y="522.5" width="27.8" height="9.9" fill="#0c72b7"/>
<rect x="1398.2" y="532.4" width="27.8" height="1.1" fill="#c9b63a"/>
<rect x="1398.2" y="385.5" width="27.8" height="1.5" fill="#ffe135"/>
<rect x="1398.2" y="386.7" width="27.8" height="96.1" fill="#ee7d30"/>
<rect x="1398.2" y="482.5" width="27.8" height="41.3" fill="#23a94a"/>
<rect x="1398.2" y="523.5" width="27.8" height="8.9" fill="#0c72b7"/>
<rect x="1453.9" y="532.4" width="27.8" height="1.1" fill="#c9b63a"/>
<rect x="1453.9" y="378.5" width="27.8" height="2.8" fill="#ffe135"/>
<rect x="1453.9" y="381" width="27.8" height="99.3" fill="#ee7d30"/>
<rect x="1453.9" y="480" width="27.8" height="44.3" fill="#23a94a"/>
<rect x="1453.9" y="524" width="27.8" height="8.4" fill="#0c72b7"/>
<rect x="1509.7" y="532.4" width="27.8" height="1.1" fill="#c9b63a"/>
<rect x="1509.7" y="374.5" width="27.8" height="4.8" fill="#ffe135"/>
<rect x="1509.7" y="379" width="27.8" height="100.3" fill="#ee7d30"/>
<rect x="1509.7" y="479" width="27.8" height="44.3" fill="#23a94a"/>
<rect x="1509.7" y="523" width="27.8" height="9.4" fill="#0c72b7"/>
<rect x="1565.4" y="532.4" width="27.8" height="1.1" fill="#c9b63a"/>
<rect x="1565.4" y="391.5" width="27.8" height="6.8" fill="#ffe135"/>
<rect x="1565.4" y="398" width="27.8" height="86.8" fill="#ee7d30"/>
<rect x="1565.4" y="484.5" width="27.8" height="40.8" fill="#23a94a"/>
<rect x="1565.4" y="525" width="27.8" height="7.4" fill="#0c72b7"/>
<rect x="1621.2" y="532.4" width="27.8" height="1.1" fill="#c9b63a"/>
<rect x="1621.2" y="393.5" width="27.8" height="14.8" fill="#ffe135"/>
<rect x="1621.2" y="408" width="27.8" height="80.3" fill="#ee7d30"/>
<rect x="1621.2" y="488" width="27.8" height="36.8" fill="#23a94a"/>
<rect x="1621.2" y="524.5" width="27.8" height="7.9" fill="#0c72b7"/>
<rect x="1676.9" y="532.4" width="27.8" height="1.1" fill="#c9b63a"/>
<rect x="1676.9" y="395" width="27.8" height="71.8" fill="#ffe135"/>
<rect x="1676.9" y="466.5" width="27.8" height="43.3" fill="#ee7d30"/>
<rect x="1676.9" y="509.5" width="27.8" height="14.8" fill="#23a94a"/>
<rect x="1676.9" y="524" width="27.8" height="8.4" fill="#0c72b7"/>
<rect x="1732.7" y="532.4" width="27.8" height="1.1" fill="#c9b63a"/>
<rect x="1732.7" y="443.5" width="27.8" height="74.3" fill="#ffe135"/>
<rect x="1732.7" y="517.5" width="27.8" height="9.8" fill="#ee7d30"/>
<rect x="1732.7" y="527.5" width="27.8" height="4.9" fill="#0c72b7"/>
</g>
<line x1="437.5" y1="548.2" x2="489.8" y2="548.2" stroke="#b4b4b4" stroke-width="1.2"/>
<text x="458.0" y="568.5" font-size="13.3" fill="#2f4a58" text-anchor="middle">Mar 19</text>
<line x1="493.2" y1="548.2" x2="545.5" y2="548.2" stroke="#b4b4b4" stroke-width="1.2"/>
<text x="513.8" y="591.9" font-size="13.3" fill="#2f4a58" text-anchor="middle">Apr 19</text>
<line x1="549.0" y1="548.2" x2="601.3" y2="548.2" stroke="#b4b4b4" stroke-width="1.2"/>
<text x="569.5" y="568.5" font-size="13.3" fill="#2f4a58" text-anchor="middle">May 19</text>
<line x1="604.8" y1="548.2" x2="657.0" y2="548.2" stroke="#b4b4b4" stroke-width="1.2"/>
<text x="625.2" y="591.9" font-size="13.3" fill="#2f4a58" text-anchor="middle">Jun 19</text>
<line x1="660.5" y1="548.2" x2="712.8" y2="548.2" stroke="#b4b4b4" stroke-width="1.2"/>
<text x="681.0" y="568.5" font-size="13.3" fill="#2f4a58" text-anchor="middle">Jul 19</text>
<line x1="716.2" y1="548.2" x2="768.5" y2="548.2" stroke="#b4b4b4" stroke-width="1.2"/>
<text x="736.8" y="591.9" font-size="13.3" fill="#2f4a58" text-anchor="middle">Aug 19</text>
<line x1="772.0" y1="548.2" x2="824.3" y2="548.2" stroke="#b4b4b4" stroke-width="1.2"/>
<text x="792.5" y="568.5" font-size="13.3" fill="#2f4a58" text-anchor="middle">Sep 19</text>
<line x1="827.8" y1="548.2" x2="880.0" y2="548.2" stroke="#b4b4b4" stroke-width="1.2"/>
<text x="848.2" y="591.9" font-size="13.3" fill="#2f4a58" text-anchor="middle">Oct 19</text>
<line x1="883.5" y1="548.2" x2="935.8" y2="548.2" stroke="#b4b4b4" stroke-width="1.2"/>
<text x="904.0" y="568.5" font-size="13.3" fill="#2f4a58" text-anchor="middle">Nov 19</text>
<line x1="939.2" y1="548.2" x2="991.5" y2="548.2" stroke="#b4b4b4" stroke-width="1.2"/>
<text x="959.8" y="591.9" font-size="13.3" fill="#2f4a58" text-anchor="middle">Dec 19</text>
<line x1="995.0" y1="548.2" x2="1047.3" y2="548.2" stroke="#b4b4b4" stroke-width="1.2"/>
<text x="1015.5" y="568.5" font-size="13.3" fill="#2f4a58" text-anchor="middle">Jan 20</text>
<line x1="1050.8" y1="548.2" x2="1103.0" y2="548.2" stroke="#b4b4b4" stroke-width="1.2"/>
<text x="1071.2" y="591.9" font-size="13.3" fill="#2f4a58" text-anchor="middle">Feb 20</text>
<line x1="1106.5" y1="548.2" x2="1158.8" y2="548.2" stroke="#b4b4b4" stroke-width="1.2"/>
<text x="1127.0" y="568.5" font-size="13.3" fill="#2f4a58" text-anchor="middle">Mar 20</text>
<line x1="1162.2" y1="548.2" x2="1214.5" y2="548.2" stroke="#b4b4b4" stroke-width="1.2"/>
<text x="1182.8" y="591.9" font-size="13.3" fill="#2f4a58" text-anchor="middle">Apr 20</text>
<line x1="1218.0" y1="548.2" x2="1270.3" y2="548.2" stroke="#b4b4b4" stroke-width="1.2"/>
<text x="1238.5" y="568.5" font-size="13.3" fill="#2f4a58" text-anchor="middle">May 20</text>
<line x1="1273.8" y1="548.2" x2="1326.0" y2="548.2" stroke="#b4b4b4" stroke-width="1.2"/>
<text x="1294.2" y="591.9" font-size="13.3" fill="#2f4a58" text-anchor="middle">Jun 20</text>
<line x1="1329.5" y1="548.2" x2="1381.8" y2="548.2" stroke="#b4b4b4" stroke-width="1.2"/>
<text x="1350.0" y="568.5" font-size="13.3" fill="#2f4a58" text-anchor="middle">Jul 20</text>
<line x1="1385.2" y1="548.2" x2="1437.5" y2="548.2" stroke="#b4b4b4" stroke-width="1.2"/>
<text x="1405.8" y="591.9" font-size="13.3" fill="#2f4a58" text-anchor="middle">Aug 20</text>
<line x1="1441.0" y1="548.2" x2="1493.3" y2="548.2" stroke="#b4b4b4" stroke-width="1.2"/>
<text x="1461.5" y="568.5" font-size="13.3" fill="#2f4a58" text-anchor="middle">Sep 20</text>
<line x1="1496.8" y1="548.2" x2="1549.0" y2="548.2" stroke="#b4b4b4" stroke-width="1.2"/>
<text x="1517.2" y="591.9" font-size="13.3" fill="#2f4a58" text-anchor="middle">Oct 20</text>
<line x1="1552.5" y1="548.2" x2="1604.8" y2="548.2" stroke="#b4b4b4" stroke-width="1.2"/>
<text x="1573.0" y="568.5" font-size="13.3" fill="#2f4a58" text-anchor="middle">Nov 20</text>
<line x1="1608.2" y1="548.2" x2="1660.5" y2="548.2" stroke="#b4b4b4" stroke-width="1.2"/>
<text x="1628.8" y="591.9" font-size="13.3" fill="#2f4a58" text-anchor="middle">Dec 20</text>
<line x1="1664.0" y1="548.2" x2="1716.3" y2="548.2" stroke="#b4b4b4" stroke-width="1.2"/>
<text x="1684.5" y="568.5" font-size="13.3" fill="#2f4a58" text-anchor="middle">Jan 21</text>
<line x1="1719.8" y1="548.2" x2="1772.0" y2="548.2" stroke="#b4b4b4" stroke-width="1.2"/>
<text x="1740.2" y="591.9" font-size="13.3" fill="#2f4a58" text-anchor="middle">Feb 21</text>
</svg>
<div class="abs" style="left:1783px;top:426.1px;width:14px;height:18.6px;background:#0c72b7"></div>
<div class="lg" style="left:1811px;top:424.5px;letter-spacing:0.25px">Patient Payments</div>
<div class="abs" style="left:1783px;top:458.1px;width:14px;height:18.6px;background:#23a94a"></div>
<div class="lg" style="left:1811px;top:456.5px;letter-spacing:0.36px">Insurance Payments</div>
<div class="abs" style="left:1783px;top:490.1px;width:14px;height:18.6px;background:#ee7d30"></div>
<div class="lg" style="left:1811px;top:488.5px;letter-spacing:0.25px">Adjustments</div>
<div class="abs" style="left:1783px;top:522.1px;width:14px;height:18.6px;background:#ffe135"></div>
<div class="lg" style="left:1811px;top:520.5px;letter-spacing:0.25px">Balance</div>
<div class="abs" style="left:1940.7px;top:260.7px;width:41px;height:37.6px;border-radius:8px;background:radial-gradient(ellipse at 50% 42%,#f9cb9a 0%,#f6b068 60%,#f4a250 100%)"></div>
<svg class="abs" style="left:1940.5px;top:260.5px" width="41" height="38" viewBox="0 0 41 38"><defs><linearGradient id="pg1" x1="0" y1="0" x2="0" y2="1"><stop offset="0" stop-color="#f4f4f4"/><stop offset="1" stop-color="#b9b9b9"/></linearGradient><linearGradient id="pg2" x1="0" y1="0" x2="0" y2="1"><stop offset="0" stop-color="#d5daf0"/><stop offset="1" stop-color="#f6f6f8"/></linearGradient></defs><rect x="12.2" y="5.5" width="17.6" height="13" fill="url(#pg2)" stroke="#9a9a9a" stroke-width=".7"/><rect x="6.2" y="15.2" width="29.3" height="12.6" rx="2.6" fill="url(#pg1)" stroke="#8a8a8a" stroke-width=".7"/><rect x="11.6" y="17.2" width="18.6" height="8.8" fill="#e9e9e9" stroke="#777" stroke-width=".7"/><rect x="26" y="22" width="2.2" height="2.2" fill="#888"/><rect x="11.8" y="27.2" width="18.2" height="3.8" fill="#fff" stroke="#555" stroke-width=".8"/></svg>
<div class="abs" style="left:317px;top:304.9px;width:1665px;height:33.1px;background:#d2e7f7;border:1px solid #8fc0e6"></div>
<div class="abs" style="left:334.5px;top:310px;font-size:16.5px;line-height:20px;font-weight:bold;color:#7d8388;white-space:nowrap;letter-spacing:.25px">Showing:</div>
<div class="abs" style="left:422px;top:310px;font-size:16.5px;line-height:20px;font-weight:bold;color:#123a70;white-space:nowrap">All Providers, All Locations</div>
<div class="abs" style="left:1954.3px;top:314.2px;width:0;height:0;border-top:7.7px solid transparent;border-bottom:7.7px solid transparent;border-left:9px solid #103b7a"></div>
<div class="dd" style="left:1776px;top:345px;width:142px;height:25px"><span>By Month</span><i></i></div>
<div class="abs" style="left:317px;top:607px;width:1665px;height:35.5px;background:#efefef;border-radius:8px"></div>
<div class="b16" style="left:335px;top:614px">19,587,753.27 in total outstanding accounts receivable</div>
<div class="b16" style="right:1556.5px;top:651.4px">18,458,964.67</div>
<div class="lnk" style="left:462.5px;top:651.4px">Primary Insurance</div>
<div class="b16" style="right:1556.5px;top:683.9px">-1,024,291.31</div>
<div class="lnk" style="left:462.5px;top:683.9px">Secondary Insurance</div>
<div class="b16" style="right:807.7px;top:651.4px">574,293.86</div>
<div class="lnk" style="left:1211.3px;top:651.4px">Patient</div>
<div class="b16" style="right:122.7px;top:651.4px">1,578,786.05</div>
<div class="lnk" style="left:1896.3px;top:651.4px">Unbilled</div>
<div class="b16" style="right:122.7px;top:683.9px">-1,226,133.60</div>
<div class="lnk" style="left:1896.3px;top:683.9px">Unapplied</div>
<div class="lbar" style="left:316.5px;top:714px;width:815px;height:33px"></div>
<div class="lbar" style="left:1167px;top:714px;width:815px;height:33px"></div>
<div class="b16" style="left:337.3px;top:719.7px;color:#1b3550">Accounts Receivable By</div>
<div class="b16" style="left:1187.3px;top:719.7px;color:#1b3550">Aging By</div>
<div class="dd" style="left:912px;top:717.9px;width:201.5px;height:25.2px"><span>Rendering Provider</span><i></i></div>
<div class="dd" style="left:1787.5px;top:717.9px;width:176.5px;height:25.2px"><span>First Billed Date</span><i></i></div>
<svg class="abs" style="left:380px;top:750px" width="240" height="200" viewBox="380 750 240 200">
<defs><filter id="psh" x="-10%" y="-10%" width="125%" height="125%"><feGaussianBlur stdDeviation="1.3"/></filter></defs>
<ellipse cx="493.90000000000003" cy="853.1" rx="92.89999999999999" ry="85.1" fill="#000" filter="url(#psh)"/>
<ellipse cx="490.3" cy="850.1" rx="92.3" ry="84.5" fill="#ff5f5f"/>
<path d="M490.3 850.1 L480.01 766.13 A92.3 84.5 0 0 1 535.89 776.63 Z" fill="#0a74b0" stroke="#0a74b0" stroke-width=".4"/>
<path d="M490.3 850.1 L398.71 839.66 A92.3 84.5 0 0 1 410.94 806.96 Z" fill="#ffe33a" stroke="#ffe33a" stroke-width=".4"/>
<path d="M490.3 850.1 L410.94 806.96 A92.3 84.5 0 0 1 440.30 779.07 Z" fill="#ee7d30" stroke="#ee7d30" stroke-width=".4"/>
<path d="M490.3 850.1 L440.30 779.07 A92.3 84.5 0 0 1 480.01 766.13 Z" fill="#22a84a" stroke="#22a84a" stroke-width=".4"/>
</svg>
<div class="abs" style="left:671.2px;top:794.1px;width:13.8px;height:18.9px;background:#0a74b0"></div>
<div class="lg" style="left:699.3px;top:792.7px;letter-spacing:0.18px">CHANG, TOM</div>
<div class="abs" style="left:671.2px;top:817.1px;width:13.8px;height:18.9px;background:#22a84a"></div>
<div class="lg" style="left:699.3px;top:815.7px;letter-spacing:0.54px">MORRISON-REYES, JOSHUA</div>
<div class="abs" style="left:671.2px;top:840.0px;width:13.8px;height:18.9px;background:#ee7d30"></div>
<div class="lg" style="left:699.3px;top:838.6px;letter-spacing:0.55px">DAVIS, MICHAEL</div>
<div class="abs" style="left:671.2px;top:863.0px;width:13.8px;height:18.9px;background:#ffe33a"></div>
<div class="lg" style="left:699.3px;top:861.6px;letter-spacing:0.34px">SAMUEL, MICHAEL</div>
<div class="abs" style="left:671.2px;top:885.9px;width:13.8px;height:18.9px;background:#ff5f5f"></div>
<div class="lg" style="left:699.3px;top:884.5px;letter-spacing:0.4px">OTHERS</div>
<svg class="abs" style="left:1160px;top:755px" width="830" height="200" viewBox="1160 755 830 200" font-family="Liberation Sans, Arial, sans-serif">
<line x1="1170.5" y1="770.4" x2="1981" y2="770.4" stroke="#eeeeee" stroke-width="1"/>
<line x1="1170.5" y1="792.5" x2="1981" y2="792.5" stroke="#eeeeee" stroke-width="1"/>
<line x1="1170.5" y1="814.6" x2="1981" y2="814.6" stroke="#eeeeee" stroke-width="1"/>
<line x1="1170.5" y1="836.7" x2="1981" y2="836.7" stroke="#eeeeee" stroke-width="1"/>
<line x1="1170.5" y1="858.8" x2="1981" y2="858.8" stroke="#eeeeee" stroke-width="1"/>
<line x1="1170.5" y1="880.9" x2="1981" y2="880.9" stroke="#eeeeee" stroke-width="1"/>
<line x1="1170.5" y1="903" x2="1981" y2="903" stroke="#eeeeee" stroke-width="1"/>
<rect x="1212" y="907.3" width="16.6" height="17.4" fill="#22a045"/>
<rect x="1277.9" y="765.7" width="16.6" height="159.0" fill="#ffe135"/>
<rect x="1377.4" y="889" width="16.6" height="35.7" fill="#66f766"/>
<rect x="1476.4" y="909.8" width="16.6" height="14.9" fill="#5ffafa"/>
<rect x="1575.8" y="917.5" width="16.6" height="7.2" fill="#ee7d30"/>
<rect x="1674.9" y="924.7" width="16.6" height="18.3" fill="#5c5cf5"/>
<rect x="1773.9" y="924.7" width="16.6" height="14" fill="#ff66ee"/>
<line x1="1170.5" y1="924.7" x2="1981" y2="924.7" stroke="#a9bccd" stroke-width="1.2"/>
<line x1="1170.5" y1="947.6" x2="1981" y2="947.6" stroke="#6e6e6e" stroke-width="1.4"/>
<text x="1214.6" y="900.5" font-size="12.3" fill="#2e2e2e">UnBilled</text>
<text x="1280.9" y="779.8" font-size="12.3" fill="#2e2e2e">Current</text>
<text x="1380.3" y="882.2" font-size="12.3" fill="#2e2e2e">31 to 60</text>
<text x="1479.4" y="902.6" font-size="12.3" fill="#2e2e2e">61 to 90</text>
<text x="1578.4" y="910.7" font-size="12.3" fill="#2e2e2e">91 to 120</text>
</svg>
<!--MAIN-END-->
<div id="foot"></div>
<!--FOOTER-START-->
<div class="abs" style="right:19.3px;top:1064.3px;font-size:11.15px;line-height:14px;font-weight:bold;font-style:italic;color:#c9c9c9;white-space:nowrap">CPT® only © 2021 American Medical Association. All Rights Reserved.</div>
<div class="abs" style="left:6px;top:1083px;width:434px;height:40px;background:linear-gradient(#e6ecf5,#f3f6fa);border:1px solid #c3c9d3;border-radius:7px 0 0 7px;box-shadow:inset 0 1px 2px rgba(0,0,0,.12)"></div>
<div class="abs" style="left:439.5px;top:1083px;width:43px;height:40px;background:linear-gradient(#fafafa,#ececec);border:1px solid #cfcfcf;border-left:1px solid #c3c9d3;border-radius:0 7px 7px 0"></div>
<div class="abs" style="left:14.3px;top:1089.5px;font-size:16.6px;line-height:20px;color:#6b6b6b;white-space:nowrap">Search Help...</div>
<svg class="abs" style="left:449px;top:1090px" width="24" height="22" viewBox="0 0 24 22"><circle cx="9.6" cy="9.2" r="5.6" fill="none" stroke="#2d2d2d" stroke-width="2.2"/><line x1="13.8" y1="13.4" x2="19.6" y2="18.6" stroke="#2d2d2d" stroke-width="3.4" stroke-linecap="round"/></svg>
<div class="abs" style="left:1637px;top:1078.7px;width:316.5px;height:41px;background:linear-gradient(#ffffff,#ededed);border:1px solid #c6c6c6;border-radius:4px 4px 0 0"></div>
<div class="abs" style="left:0;top:1112.5px;width:1995.6px;height:4px;background:linear-gradient(rgba(0,0,0,0),rgba(0,0,0,.09))"></div>
<div class="abs" style="left:1693px;top:1088px;font-size:16.2px;line-height:20px;font-weight:bold;color:#222;white-space:nowrap">Chat</div>
<svg class="abs" style="left:1652px;top:1088px" width="34" height="24" viewBox="0 0 34 24"><g fill="#2b2b2b"><ellipse cx="21" cy="9" rx="9.2" ry="6.6"/><path d="M26 13 L30.5 17 L23 14.8 Z"/></g><g fill="#2b2b2b" stroke="#f4f4f4" stroke-width="1.2"><path d="M11 8.8 C16.3 8.8 20 11.6 20 15 C20 18.4 16.3 21.2 11 21.2 C9.6 21.2 8.3 21 7.2 20.6 L2.6 22.6 L4.3 19 C2.8 17.9 2 16.5 2 15 C2 11.6 5.7 8.8 11 8.8 Z"/></g></svg>
<!--FOOTER-END-->
</div>
</body>
</html>
